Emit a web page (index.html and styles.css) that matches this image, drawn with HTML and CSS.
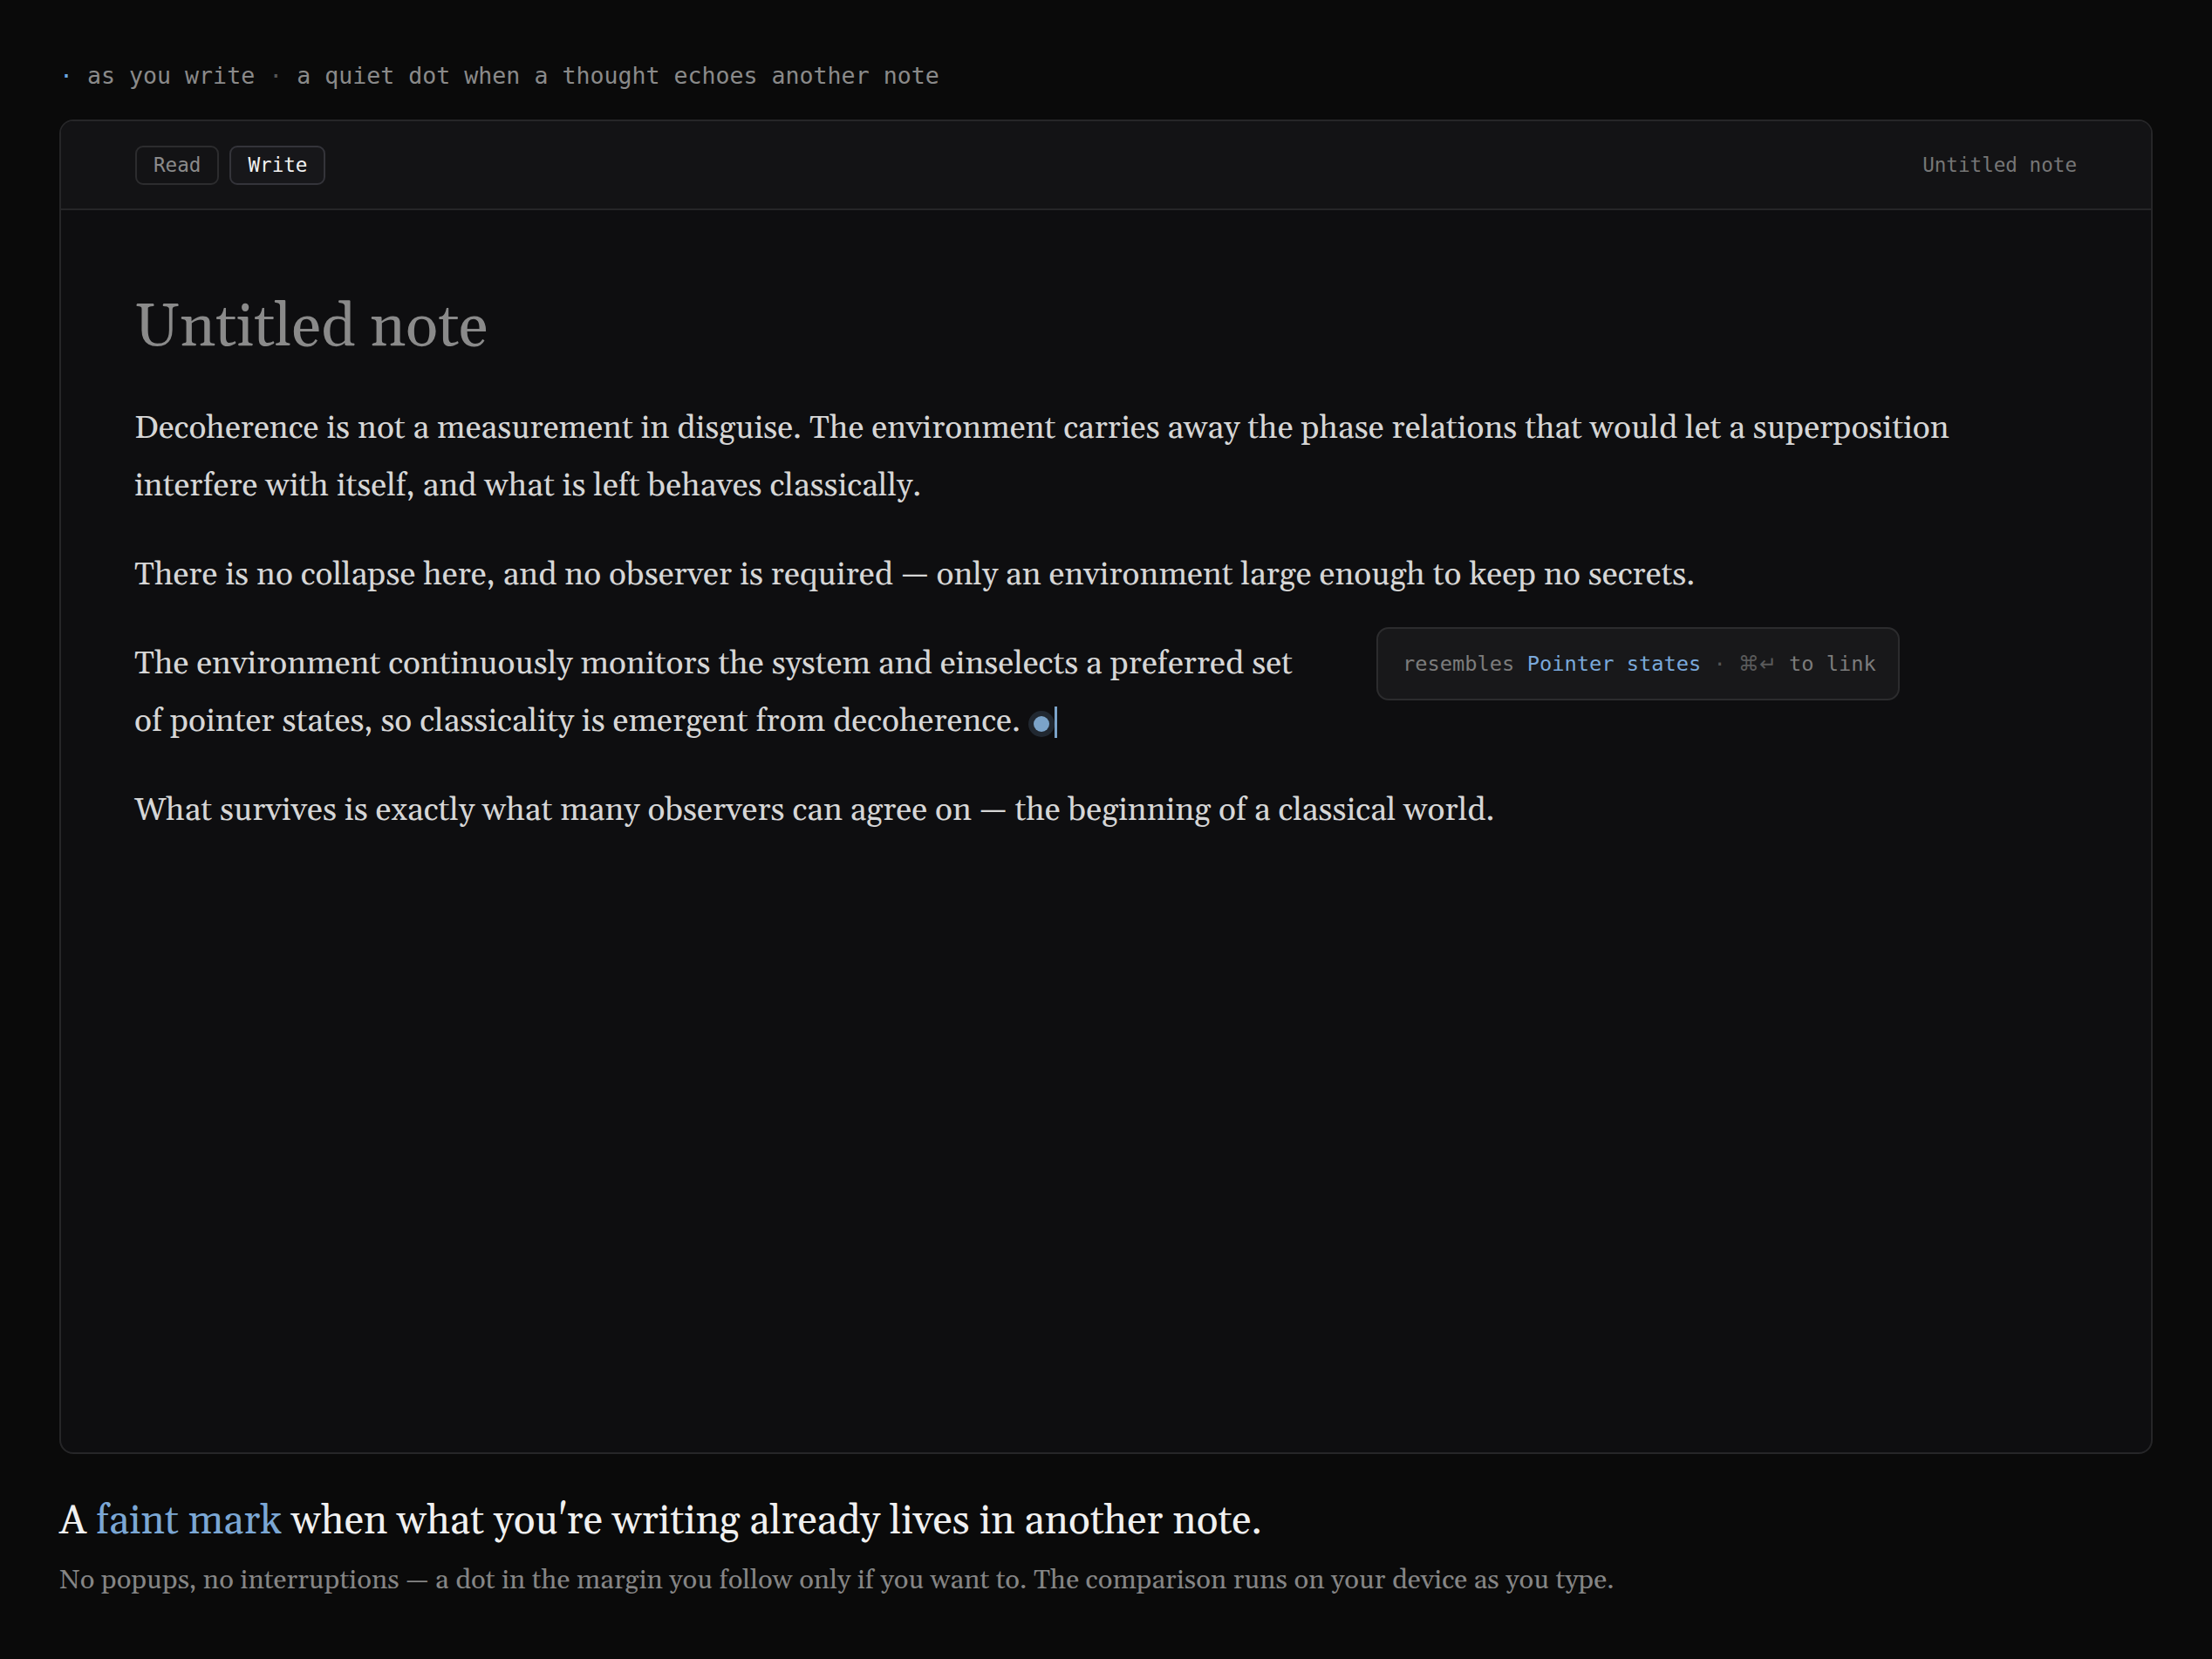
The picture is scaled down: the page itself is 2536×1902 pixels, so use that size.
FILE: index.html
```html
<!DOCTYPE html>
<html lang="en">
<head>
    <meta charset="UTF-8">
    <meta name="viewport" content="width=device-width, initial-scale=1.0">
    <title>Echoes</title>
    <link rel="stylesheet" href="styles.css">
</head>
<body>
    <div class="tagline">
        <span class="dot-live">·</span> as you write <span class="dot-sep">·</span> a quiet dot when a thought echoes another note
    </div>

    <div class="card">
        <div class="card-header">
            <div class="modes">
                <button class="mode">Read</button>
                <button class="mode active">Write</button>
            </div>
            <div class="note-name">Untitled note</div>
        </div>

        <div class="editor">
            <h1 class="note-title">Untitled note</h1>

            <p>Decoherence is not a measurement in disguise. The environment carries away the phase relations that would let a superposition interfere with itself, and what is left behaves classically.</p>

            <p>There is no collapse here, and no observer is required — only an environment large enough to keep no secrets.</p>

            <div class="echo-row">
                <p class="echo-text">The environment continuously monitors the system and einselects a preferred set of pointer states, so classicality is emergent from decoherence. <span class="echo-dot"></span><span class="caret"></span></p>
                <div class="hint">resembles <span class="hint-link">Pointer states</span> <span class="hint-dim">·</span> <span class="hint-keys">⌘↵</span> to link</div>
            </div>

            <p>What survives is exactly what many observers can agree on — the beginning of a classical world.</p>
        </div>
    </div>

    <div class="footer">
        <h2>A <span class="accent">faint mark</span> when what you're writing already lives in another note.</h2>
        <p>No popups, no interruptions — a dot in the margin you follow only if you want to. The comparison runs on your device as you type.</p>
    </div>
</body>
</html>
```

FILE: styles.css
```css
body {
    margin: 0;
    padding: 67px 68px 0;
    background-color: #0a0a0a;
    color: #d6d6d6;
    font-family: Georgia, Gelasio, "DejaVu Serif", serif;
}

.tagline {
    font-family: "DejaVu Sans Mono", "Liberation Mono", monospace;
    font-size: 26.6px;
    line-height: 40px;
    color: #8a8a8a;
    margin-bottom: 30px;
}

.dot-live { color: #6aa6e0; }
.dot-sep { color: #555; }

.card {
    background: #0e0e10;
    border: 2px solid #262628;
    border-radius: 16px;
    overflow: hidden;
}

.card-header {
    display: flex;
    justify-content: space-between;
    align-items: center;
    height: 100px;
    padding: 0 85px;
    background: #131315;
    border-bottom: 2px solid #262628;
}

.modes {
    display: flex;
    gap: 12px;
}

.mode {
    font-family: "DejaVu Sans Mono", "Liberation Mono", monospace;
    font-size: 22.6px;
    line-height: 33px;
    padding: 4px 19px;
    background: #131315;
    color: #8a8a8a;
    border: 2px solid #2c2c2e;
    border-radius: 9px;
}

.mode.active {
    color: #f2f2f2;
    background: #17171a;
    border-color: #34343a;
}

.note-name {
    font-family: "DejaVu Sans Mono", "Liberation Mono", monospace;
    font-size: 22.6px;
    color: #767676;
}

.editor {
    min-height: 1424px;
    box-sizing: border-box;
    padding: 93px 84px 60px;
}

.note-title {
    margin: 0 0 41px;
    font-size: 69px;
    font-weight: normal;
    line-height: 84px;
    color: #8a8a8a;
}

.editor p {
    margin: 0 0 36px;
    font-size: 37px;
    line-height: 66px;
    max-width: 2180px;
}

.echo-row {
    display: flex;
    align-items: flex-start;
}

.editor .echo-text {
    width: 1350px;
    flex-shrink: 0;
}

.echo-dot {
    display: inline-block;
    width: 18px;
    height: 18px;
    border-radius: 50%;
    background: #7ba3c9;
    box-shadow: 0 0 0 6px rgba(123, 163, 201, 0.18);
    vertical-align: -1px;
    margin-left: 6px;
    margin-right: 6px;
}

.caret {
    display: inline-block;
    width: 3px;
    height: 36px;
    background: #7ba3c9;
    vertical-align: -8px;
}

.hint {
    margin-left: 74px;
    margin-top: -10px;
    width: 600px;
    box-sizing: border-box;
    padding: 23px 28px;
    font-family: "DejaVu Sans Mono", "Liberation Mono", monospace;
    font-size: 23.7px;
    line-height: 34px;
    color: #7c7c7c;
    background: #18181a;
    border: 2px solid #2c2c2e;
    border-radius: 14px;
    white-space: nowrap;
}

.hint-link { color: #7aa9db; }
.hint-dim { color: #555; }
.hint-keys {
    color: #5a5a5a;
    font-family: "DejaVu Sans", sans-serif;
}

.footer {
    padding-top: 48px;
}

.footer h2 {
    margin: 0 0 15px;
    font-size: 46px;
    font-weight: normal;
    line-height: 60px;
    color: #f0f0f0;
}

.footer .accent { color: #7ba7d4; }

.footer p {
    margin: 0;
    font-size: 31px;
    line-height: 44px;
    color: #858585;
}
```
